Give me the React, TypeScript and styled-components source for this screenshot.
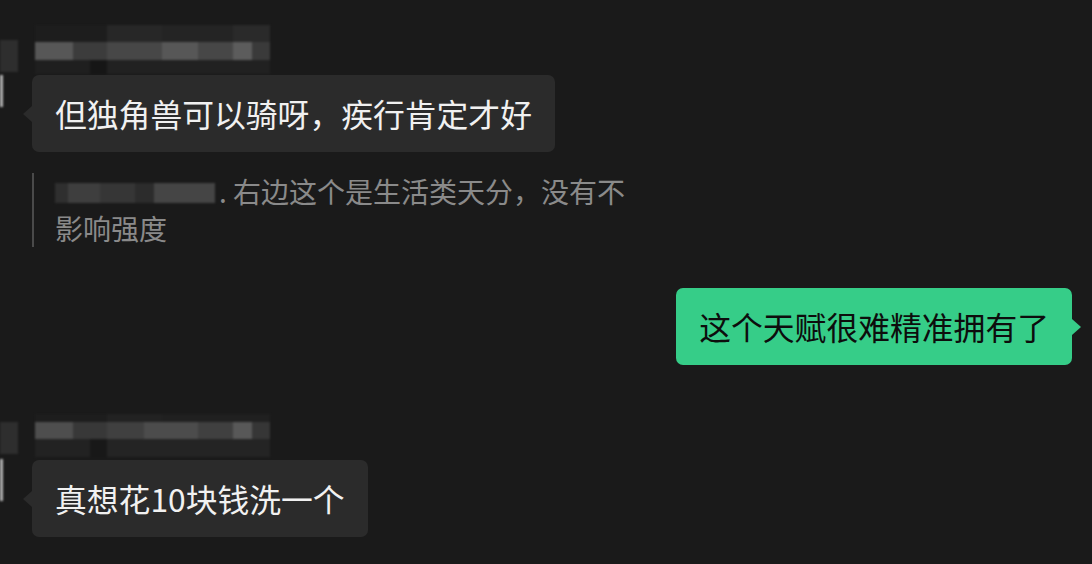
import React from "react";
import styled, { createGlobalStyle } from "styled-components";

const Global = createGlobalStyle`
  html, body { margin: 0; padding: 0; background: #1a1a1a; }
  body { font-family: "Noto Sans CJK SC", "Noto Sans", sans-serif; }
`;

const Page = styled.div`
  width: 1092px;
  height: 564px;
  overflow: hidden;
  background: #1a1a1a;
  display: flex;
  flex-direction: column;
  padding: 0 20px 0 0;
  box-sizing: border-box;
`;

const Row = styled.div<{ $top: number }>`
  display: flex;
  align-items: flex-start;
  gap: 14px;
  margin-top: ${(p) => p.$top}px;
`;

const AvatarSliver = styled.div<{ $offset: number; $edge: number; $edgeGap: number }>`
  width: 18px;
  flex: none;
  margin-top: ${(p) => p.$offset}px;
  display: flex;
  flex-direction: column;
  gap: ${(p) => p.$edgeGap}px;
  filter: blur(0.8px);
  &::before {
    content: "";
    display: block;
    height: 32px;
    background: #2e2e2e;
  }
  &::after {
    content: "";
    display: block;
    width: 3px;
    height: ${(p) => p.$edge}px;
    background: #b5b5b5;
  }
`;

const Column = styled.div`
  display: flex;
  flex-direction: column;
  align-items: flex-start;
`;

const NameBlur = styled.div<{ $gapBelow: number }>`
  display: flex;
  flex-direction: column;
  margin-left: 3px;
  margin-bottom: ${(p) => p.$gapBelow}px;
  filter: blur(1.2px);
`;

const BlurRow = styled.div<{ $h: number }>`
  display: flex;
  height: ${(p) => p.$h}px;
`;

const Block = styled.div<{ $w: number; $c: string }>`
  width: ${(p) => p.$w}px;
  background: ${(p) => p.$c};
`;

const Bubble = styled.div<{ $mine?: boolean }>`
  position: relative;
  padding: 16px 23px 16px 23px;
  line-height: 45px;
  font-size: 31.8px;
  border-radius: 7px;
  white-space: nowrap;
  background: ${(p) => (p.$mine ? "#36cd88" : "#2b2b2b")};
  color: ${(p) => (p.$mine ? "#0d0d0d" : "#f1f1f1")};
  &::before {
    content: "";
    position: absolute;
    top: 50%;
    margin-top: -8px;
    border-top: 8px solid transparent;
    border-bottom: 8px solid transparent;
    ${(p) =>
      p.$mine
        ? `right: -9px; border-left: 9px solid #36cd88;`
        : `left: -9px; border-right: 9px solid #2b2b2b;`}
  }
`;

const Quote = styled.div`
  margin: 21px 0 0 32px;
  width: 578px;
  border-left: 2px solid #4a4a4a;
  padding-left: 21px;
  font-size: 28px;
  line-height: 37px;
  color: #8a8a8a;
`;

const QuoteName = styled.span`
  display: inline-block;
  vertical-align: middle;
  width: 160px;
  height: 20px;
  margin: -4px 4px 0 0;
  background: linear-gradient(
    90deg,
    #2f2f2f 0 8%,
    #3e3e3e 8% 28%,
    #363636 28% 50%,
    #2c2c2c 50% 62%,
    #454545 62% 100%
  );
  filter: blur(1px);
`;

const OutRow = styled.div`
  display: flex;
  justify-content: flex-end;
  margin-top: 41px;
`;

type Seg = [number, string];

const nameRows1: { h: number; segs: Seg[] }[] = [
  { h: 17, segs: [[72, "#1d1d1d"], [55, "#272727"], [71, "#242424"], [37, "#2a2a2a"]] },
  { h: 18, segs: [[38, "#575757"], [34, "#3c3c3c"], [55, "#474747"], [36, "#575757"], [35, "#474747"], [19, "#5c5c5c"], [18, "#3a3a3a"]] },
  { h: 14, segs: [[55, "#1f1f1f"], [17, "#161616"], [163, "#212121"]] },
];

const nameRows2: { h: number; segs: Seg[] }[] = [
  { h: 8, segs: [[72, "#1d1d1d"], [55, "#222222"], [108, "#202020"]] },
  { h: 17, segs: [[38, "#4e4e4e"], [34, "#383838"], [37, "#404040"], [54, "#4c4c4c"], [35, "#404040"], [19, "#585858"], [18, "#363636"]] },
  { h: 18, segs: [[55, "#222222"], [17, "#181818"], [163, "#242424"]] },
];

function Name({ rows, gapBelow }: { rows: { h: number; segs: Seg[] }[]; gapBelow: number }) {
  return (
    <NameBlur $gapBelow={gapBelow}>
      {rows.map((r, i) => (
        <BlurRow key={i} $h={r.h}>
          {r.segs.map(([w, c], j) => (
            <Block key={j} $w={w} $c={c} />
          ))}
        </BlurRow>
      ))}
    </NameBlur>
  );
}

export default function App() {
  return (
    <>
      <Global />
      <Page>
        <Row $top={25}>
          <AvatarSliver $offset={15} $edge={32} $edgeGap={3} />
          <Column>
            <Name rows={nameRows1} gapBelow={1} />
            <Bubble>但独角兽可以骑呀，疾行肯定才好</Bubble>
          </Column>
        </Row>
        <Quote>
          <QuoteName />. 右边这个是生活类天分，没有不影响强度
        </Quote>
        <OutRow>
          <Bubble $mine>这个天赋很难精准拥有了</Bubble>
        </OutRow>
        <Row $top={49}>
          <AvatarSliver $offset={8} $edge={42} $edgeGap={5} />
          <Column>
            <Name rows={nameRows2} gapBelow={3} />
            <Bubble>真想花10块钱洗一个</Bubble>
          </Column>
        </Row>
      </Page>
    </>
  );
}
